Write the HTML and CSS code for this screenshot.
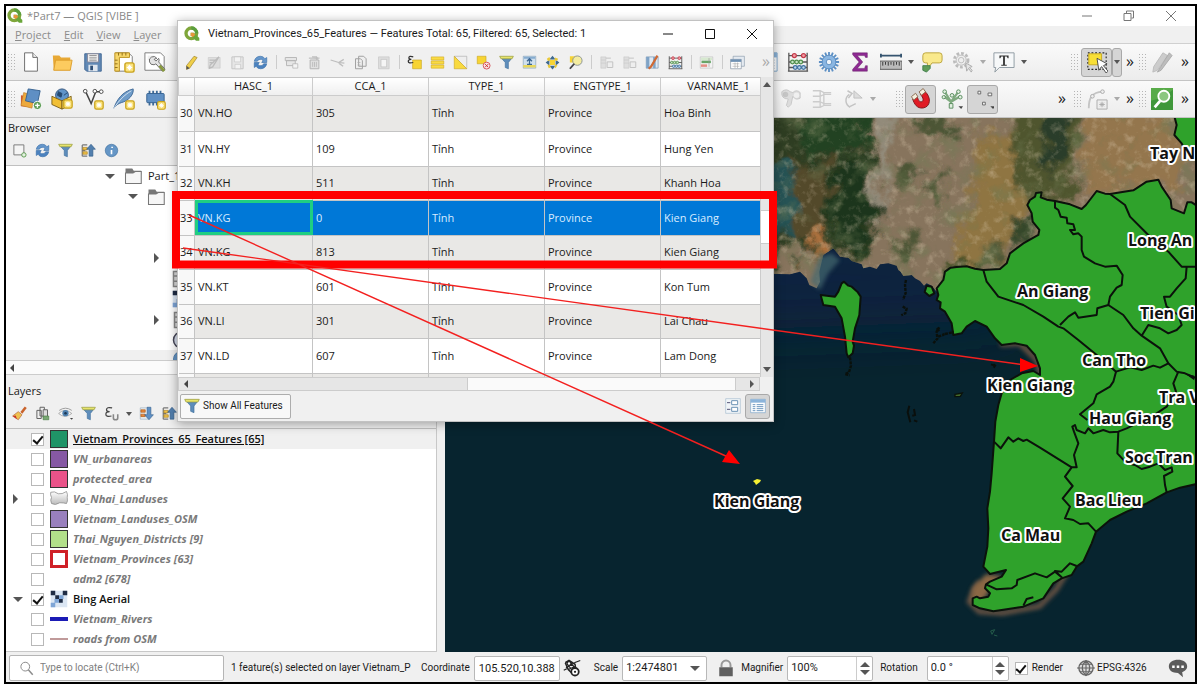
FILE: index.html
```html
<!DOCTYPE html>
<html lang="en">
<head>
<meta charset="utf-8">
<title>*Part7 — QGIS [VIBE ]</title>
<link rel="stylesheet" href="styles.css">
</head>
<body>
<svg class="defs" aria-hidden="true">
<defs>
<linearGradient id="gg" x1="0" y1="0" x2="0" y2="1"><stop offset="0" stop-color="#fff"/><stop offset="1" stop-color="#bbb"/></linearGradient>
<symbol id="logo" viewBox="0 0 24 24"><circle cx="11" cy="11" r="8" fill="none" stroke="#7fa63a" stroke-width="5"/><path d="M11 3a8 8 0 0 1 8 8" fill="none" stroke="#5b9e3e" stroke-width="5"/><path d="M10 10h5l8 8v4h-5l-8-8z" fill="#6aa63a"/><path d="M10 10h4l3 3-4 4-3-3z" fill="#e8963c"/></symbol>
<symbol id="star" viewBox="0 0 12 12"><rect x="1" y="1" width="10" height="10" rx="2" fill="#fbe27a" stroke="#c9a21b" stroke-width="1.5"/><path d="M6 3v6M3 6h6M4 4l4 4M8 4l-4 4" stroke="#fff" stroke-width="1.2"/></symbol>
<symbol id="new" viewBox="0 0 24 24"><path d="M5 2h9l5 5v15H5z" fill="#fff" stroke="#666"/><path d="M14 2v5h5" fill="#eee" stroke="#666"/></symbol>
<symbol id="open" viewBox="0 0 24 24"><path d="M2 5h7l2 2h10v14H3z" fill="#e8a936"/><path d="M5 10h18l-2 11H3z" fill="#fccb5f" stroke="#dc9d2a"/></symbol>
<symbol id="save" viewBox="0 0 24 24"><path d="M3 3h18v19H5l-2-2z" fill="#6189b5" stroke="#3f6693"/><path d="M6 3h12v9H6z" fill="#eee" stroke="#889"/><path d="M8 5h8M8 7.500h8M8 10h8" stroke="#888"/><path d="M7 15h10v7H7z" fill="#dfe6ee"/><path d="M9 16h3v5H9z" fill="#2e4f76"/></symbol>
<symbol id="layout" viewBox="0 0 24 24"><path d="M3 2h14l4 4v16H3z" fill="#fff" stroke="#777"/><path d="M2 2h16v5H7v15H2z" fill="#f6d66a" stroke="#b98d1a"/><path d="M6 2v3M10 2v3M14 2v3M2 10h3M2 14h3M2 18h3" stroke="#8b6914"/><use href="#star" x="12" y="12" width="12" height="12"/></symbol>
<symbol id="report" viewBox="0 0 24 24"><path d="M1 2h17l4 4v15H1z" fill="#fff" stroke="#777"/><path d="M4 5h7v5H4z" fill="#eee"/><path d="M14 8a4.500 4.500 0 1 0-3 7l2-1 7 8 3-2-7-8a4 4 0 0 0 0-4l-3 3-2-2z" fill="#e4e4e4" stroke="#666"/><path d="M17 16l5 6" stroke="#88993d" stroke-width="3"/></symbol>
<symbol id="addlayer" viewBox="0 0 24 24"><path d="M1 8l12 2-2 11-10-1z" fill="#d2572e"/><path d="M4 5l12 3-3 14-12-3z" fill="#eda93d" stroke="#b9772a" stroke-width=".6"/><path d="M9 1l13 2-3 14-13-3z" fill="#5f8fc4" stroke="#35608f"/><circle cx="19" cy="19" r="4.500" fill="#5f9d57" stroke="#fff"/><path d="M19 16.500v5M16.500 19h5" stroke="#fff" stroke-width="1.500"/></symbol>
<symbol id="geopkg" viewBox="0 0 24 24"><circle cx="12" cy="8" r="7" fill="#5f94c9" stroke="#2d4e77"/><path d="M8 4l4 2-1 4-4-2zM14 8l4-3" fill="#244870" stroke="#244870"/><path d="M1 9l11 5v9L1 18z" fill="#f1bf35" stroke="#7b5e16"/><path d="M12 14l10-5v9l-10 5z" fill="#fbdc6a" stroke="#7b5e16"/><use href="#star" x="13" y="12" width="11" height="11"/></symbol>
<symbol id="vlayer" viewBox="0 0 24 24"><path d="M4 4l6 13L15 4h6" fill="none" stroke="#444" stroke-width="1.600"/><circle cx="3.500" cy="3.500" r="2" fill="#fff" stroke="#444"/><circle cx="14" cy="3.500" r="2" fill="#fff" stroke="#444"/><circle cx="21" cy="4" r="2" fill="#fff" stroke="#444"/><use href="#star" x="13" y="13" width="11" height="11"/></symbol>
<symbol id="feather" viewBox="0 0 24 24"><path d="M1 22C4 13 10 4 22 1c1 6-5 13-13 15-3 1-5 2-8 6z" fill="#6f9cc9" stroke="#3c6795"/><path d="M1 22C7 13 12 8 20 3" stroke="#d8e6f3" fill="none"/><use href="#star" x="13" y="13" width="11" height="11"/></symbol>
<symbol id="chip" viewBox="0 0 24 24"><path d="M6 3v16M10 3v16M14 3v16M18 3v16" stroke="#3f6b98" stroke-width="2"/><rect x="3" y="6" width="19" height="10" rx="1" fill="#6090c4" stroke="#35608f"/><use href="#star" x="14" y="14" width="10" height="10"/></symbol>
<symbol id="abacus" viewBox="0 0 24 24"><path d="M2 2v20M22 2v20M1 22h22M2 5h20M2 12h20M2 18h20" stroke="#555" stroke-width="1.400" fill="none"/><g stroke-width="1.300"><g fill="#f3a0a8" stroke="#c33b4a"><circle cx="8" cy="5" r="2.200"/><circle cx="18" cy="5" r="2.200"/></g><g fill="#c6e5c3" stroke="#4c8b48"><circle cx="6" cy="12" r="2"/><circle cx="10.500" cy="12" r="2"/><circle cx="15" cy="12" r="2"/></g><g fill="#b9d5ee" stroke="#3b6e9e"><circle cx="9" cy="18" r="2"/><circle cx="13.500" cy="18" r="2"/><circle cx="18" cy="18" r="2"/></g></g></symbol>
<symbol id="gear" viewBox="0 0 24 24"><path d="M12 1v22M1 12h22M4.200 4.200l15.600 15.600M19.800 4.200L4.200 19.800M7.800 1.800l8.400 20.400M16.200 1.800L7.800 22.200M1.800 7.800l20.400 8.400M22.200 7.800L1.800 16.200" stroke="#5c8fc4" stroke-width="2"/><circle cx="12" cy="12" r="7.500" fill="#8ab6e2" stroke="#5a8cc0"/><circle cx="12" cy="12" r="3" fill="#eef4fa" stroke="#5a8cc0"/></symbol>
<symbol id="sigma" viewBox="0 0 24 24"><path d="M4 2h16v5h-2l-1-2H9l6 7-6 7h8l1-3h2v6H4v-2l7-8-7-8z" fill="#8e2a92" stroke="#5c175f" stroke-width=".5"/></symbol>
<symbol id="ruler" viewBox="0 0 24 24"><path d="M1 5h22M1 3v4M23 3v4" stroke="#35546f" stroke-width="2"/><path d="M0 11h24v9H0z" fill="#bbb" stroke="#555"/><path d="M3 12v4M6 12v3M9 12v4M12 12v3M15 12v4M18 12v3M21 12v4" stroke="#333"/></symbol>
<symbol id="tip" viewBox="0 0 24 24"><path d="M5 2h15q3 0 3 3v5q0 3-3 3h-8l-5 7v-7H5q-3 0-3-3V5q0-3 3-3z" fill="#f9e98c" stroke="#b9a23c"/><path d="M2 16h8v3l-4 4-4-2z" fill="#5f9d57" stroke="#3f7d4b"/></symbol>
<symbol id="gearfind" viewBox="0 0 24 24"><g stroke="#bbb" fill="none"><circle cx="10" cy="10" r="7.500" stroke-width="3" stroke-dasharray="3 2"/><circle cx="10" cy="10" r="5.500" fill="#eee"/><circle cx="10" cy="10" r="3"/><path d="M15 13l1 9 2-3 3 4 1-2-3-3 3-1z" fill="#e4e4e4" stroke="#aaa"/></g></symbol>
<symbol id="textann" viewBox="0 0 24 24"><path d="M1 2h22v16H7l-5 5 1-5H1z" fill="#f6f8f9" stroke="#8b979f"/><path d="M7 5h10v3h-1l-1-2h-2v9h2v1H9v-1h2V6H9L8 8H7z" fill="#333"/></symbol>
<symbol id="select" viewBox="0 0 24 24"><path d="M2 2h20v18H2z" fill="none" stroke="#222" stroke-width="1.200" stroke-dasharray="2 2"/><path d="M3 3h14v12H3z" fill="#f8df36" stroke="#c7a81c"/><path d="M12 8l2 13 3-4 5 7 2-2-5-6 4-2z" fill="#fff" stroke="#444"/></symbol>
<symbol id="pencils" viewBox="0 0 24 24"><path d="M13 2l5 3-11 16-5 2 1-6z" fill="#ccc" stroke="#bbb"/><path d="M20 2l3 3-12 16-4 2z" fill="#bdbdbd" stroke="#aaa"/></symbol>
<symbol id="binoc" viewBox="0 0 24 24"><path d="M2 4q5-4 9 0l3 1q4-4 8 0v6q-5 3-8-2l-2 9-3 3-2-2 2-7q-8 0-7-8z" fill="#dcdcdc" stroke="#c6c6c6"/><circle cx="6" cy="7" r="3" fill="#c4c4c4"/><circle cx="18" cy="8" r="3" fill="#f0f0f0"/></symbol>
<symbol id="mesh" viewBox="0 0 24 24"><path d="M2 3h8l4 2h8M2 9h8l4-2h8M2 15h8l4 2h8M2 21h8l4-2h8M10 3v18M14 5v14" stroke="#ccc" stroke-width="1.500" fill="none"/></symbol>
<symbol id="rot" viewBox="0 0 24 24"><path d="M9 21a8 8 0 0 1-1-14M6 3l5 3-4 5M9 20l6-3" fill="none" stroke="#c4c4c4" stroke-width="1.600"/><path d="M13 3l9 8h-9z" fill="#ddd" stroke="#c0c0c0"/></symbol>
<symbol id="magnet" viewBox="0 0 24 24"><g transform="rotate(-8 12 12)"><path d="M3 11l5-3c1 4 1 7 4 7s3-4 0-8l5-3c7 8 4 18-4 18C6 22 4 16 3 11z" fill="#e01b24" stroke="#83151a"/><path d="M2 8l5-3 2 4-5 3zM11 4l5-3 2 4-5 3z" fill="#f5efdf" stroke="#8a6b52"/></g></symbol>
<symbol id="topo" viewBox="0 0 24 24"><path d="M4 4l7 11 8-11M11 15l10-6M10 20l1-5M3 9l8 6" stroke="#7faa7f" stroke-width="2.400" fill="none"/><g fill="#e2efe0" stroke="#548a5b"><circle cx="4" cy="4" r="2"/><circle cx="19" cy="4" r="2"/><circle cx="21" cy="10" r="2"/><circle cx="12" cy="8" r="2"/><circle cx="3" cy="10" r="1.800"/><path d="M9 17h4v5H9z"/></g><path d="M19 20h5l-2 3z" fill="#444"/></symbol>
<symbol id="snapdots" viewBox="0 0 24 24"><g fill="#f4f4f4" stroke="#666"><path d="M6.500 3.500h3v3h-3zM17.500 5.500h4v3h-4zM11.500 15.500h3v3h-3z"/></g><path d="M20 20h5l-2 3z" fill="#444"/></symbol>
<symbol id="curve" viewBox="0 0 24 24"><path d="M3 22C3 10 7 5 18 4" stroke="#c4c4c4" stroke-width="2" fill="none"/><g fill="#eee" stroke="#aaa"><circle cx="18" cy="4" r="2"/><circle cx="7" cy="9" r="2"/><path d="M12 13h11v10H12z"/><path d="M17.500 15v6M14.500 18h6M15.500 16l4 4M19.500 16l-4 4"/></g></symbol>
<symbol id="find" viewBox="0 0 24 24"><path d="M0 0h24v24H0z" fill="#58ab49"/><path d="M0 14q12-2 24-12v22H0z" fill="#3f973a"/><circle cx="14" cy="9" r="6" fill="#8bc77f" stroke="#fff" stroke-width="2"/><path d="M10 14l-6 7" stroke="#fff" stroke-width="3"/></symbol>
<symbol id="addsel" viewBox="0 0 24 24"><path d="M3 3h16v16H3z" fill="#f5f5f5" stroke="#777" stroke-width="1.500"/><circle cx="19" cy="19" r="3.500" fill="#e4f1e0" stroke="#5a9a4e" stroke-width="1.500"/></symbol>
<symbol id="refresh" viewBox="0 0 24 24"><path d="M2 10Q4 2 12 2q5 0 7 4l3-2v8h-8l2-3q-2-3-5-2-3 0-4 3z" fill="#6596cb" stroke="#376da8"/><path d="M22 14q-2 8-10 8-5 0-7-4l-3 2v-8h8l-2 3q2 3 5 2 3 0 4-3z" fill="#4b82bf" stroke="#376da8"/></symbol>
<symbol id="filter" viewBox="0 0 24 24"><path d="M2 3h20l-7 9v10l-5-2v-8z" fill="#5e8dbb" stroke="#3f6f9c"/><path d="M1 2h22l-2 4H3z" fill="#e7e46b" stroke="#9a9a3a"/></symbol>
<symbol id="collapse" viewBox="0 0 24 24"><path d="M2 3h8M2 21h8M2 3v18M2 12h5" stroke="#777" stroke-width="2" fill="none"/><path d="M3 7h7v4H3zM3 14h7v4H3z" fill="#f0c24a" stroke="#a77c18"/><path d="M16 2l7 8h-4v11h-6V10H9z" fill="#527fae" stroke="#2f5a86"/></symbol>
<symbol id="expand" viewBox="0 0 24 24"><path d="M2 3h13v18H2z" fill="#eef2f5" stroke="#93a9bd"/><path d="M3 6h7v4H3zM3 13h7v4H3z" fill="#e9873a" stroke="#a75918"/><path d="M16 22l7-8h-4V2h-6v12H9z" fill="#5f90c4" stroke="#35608f"/></symbol>
<symbol id="info" viewBox="0 0 24 24"><circle cx="12" cy="12" r="10" fill="#6596c6" stroke="#396b9c"/><path d="M13 6v2M12 11v7" stroke="#fff" stroke-width="2.600"/></symbol>
<symbol id="folder" viewBox="0 0 24 24"><path d="M2 2h9l2 3h10v5H2z" fill="#777"/><path d="M2 8h10l3-2h8v16H2z" fill="#f6f6f6" stroke="#777" stroke-width="1.400"/></symbol>
<symbol id="brush" viewBox="0 0 24 24"><path d="M22 2l-7 9" stroke="#c9632c" stroke-width="4"/><path d="M10 9l6 5-6 8-9-6z" fill="#eec24f" stroke="#b05a31"/><path d="M1 16l5-1 2 6z" fill="#c9342c"/></symbol>
<symbol id="group" viewBox="0 0 24 24"><path d="M8 2h7v14H8zM3 7h7v13H3z" fill="#eee" stroke="#666" stroke-width="1.600"/><path d="M13 6h7v12h-7z" fill="#ddd" stroke="#666" stroke-width="1.600"/><path d="M13 16h9v6h-9z" fill="#79a873" stroke="#477a44"/></symbol>
<symbol id="eye" viewBox="0 0 24 24"><path d="M1 12q10-10 21 0-11 9-21 0z" fill="#f7f7f7" stroke="#888"/><path d="M2 7Q12 0 22 7" fill="none" stroke="#999" stroke-width="1.500"/><circle cx="12" cy="11.500" r="5" fill="#4d7fae"/><circle cx="12" cy="11.500" r="2" fill="#1c3753"/><path d="M19 19h5l-2 3z" fill="#444"/></symbol>
<symbol id="eps" viewBox="0 0 24 24"><path d="M13 3Q4 1 4 6q0 3 5 3-6 0-6 4 0 5 9 3" fill="none" stroke="#444" stroke-width="2"/><path d="M15 13v6q0 3 3.500 3t3.500-3v-6" fill="none" stroke="#888" stroke-width="2.500"/></symbol>
<symbol id="pencil" viewBox="0 0 24 24"><path d="M16 2l5 2L9 21l-5 2v-6z" fill="#f0cf4a" stroke="#967b24"/><path d="M4 17l5 4-5 2z" fill="#555"/></symbol>
<symbol id="gedit" viewBox="0 0 24 24"><path d="M2 4h19v17H2z" fill="#dedede" stroke="#c8c8c8"/><path d="M19 3L9 19l-5 2 1-5zM4 8h9M4 12h7" stroke="#bbb" stroke-width="2" fill="none"/></symbol>
<symbol id="gsave" viewBox="0 0 24 24"><path d="M3 3h18v19H3z" fill="#e6e6e6" stroke="#c4c4c4" stroke-width="1.500"/><path d="M7 3h10v8H7zM8 15h9v7H8z" fill="#f3f3f3" stroke="#c4c4c4"/></symbol>
<symbol id="gadd" viewBox="0 0 24 24"><path d="M2 4h18v5H2zM4 9h14v8H4z" fill="#e6e6e6" stroke="#b5b5b5" stroke-width="1.500"/><path d="M14 14h8v7h-8z" fill="#f4f4f4" stroke="#aaa"/></symbol>
<symbol id="gdel" viewBox="0 0 24 24"><path d="M5 8h14v14H5zM3 5h17M8 3h8v5" fill="#e0e0e0" stroke="#b5b5b5" stroke-width="1.600"/><path d="M9 11v8M12 11v8M15 11v8" stroke="#aaa"/></symbol>
<symbol id="gcut" viewBox="0 0 24 24"><path d="M1 8l13 4 9 1M14 12l8-5M14 13l7 5" stroke="#bdbdbd" stroke-width="2" fill="none"/></symbol>
<symbol id="gcopy" viewBox="0 0 24 24"><path d="M9 2h8l4 4v12H9zM4 6h8l3 3v13H4z" fill="#eee" stroke="#a2a2a2" stroke-width="1.600"/><path d="M7 12h5M7 16h5" stroke="#aaa"/></symbol>
<symbol id="gpaste" viewBox="0 0 24 24"><path d="M4 3h17v19H4z" fill="#ddd" stroke="#c4c4c4"/><path d="M8 7h9v12H8z" fill="#f5f5f5" stroke="#bbb"/></symbol>
<symbol id="selexp" viewBox="0 0 24 24"><path d="M9 8h14v14H9z" fill="#f7d433" stroke="#c9a51e"/><path d="M10 3Q3 1 3 4.500 3 7 7 7 2 7 2 10q0 4 8 2" fill="none" stroke="#333" stroke-width="2"/></symbol>
<symbol id="selall" viewBox="0 0 24 24"><path d="M2 3h20v5H2zM2 9.500h20v5H2zM2 16h20v5H2z" fill="#fadb45" stroke="#d0aa20"/></symbol>
<symbol id="selinv" viewBox="0 0 24 24"><path d="M2 2h20v20z" fill="#eee" stroke="#aaa"/><path d="M2 2v20h20z" fill="#f9da3f" stroke="#cca723"/></symbol>
<symbol id="desel" viewBox="0 0 24 24"><path d="M2 2h14v12H2z" fill="#f7d433" stroke="#c9a51e"/><circle cx="17" cy="17" r="5.500" fill="#f9e4e4" stroke="#d5525a" stroke-width="1.500"/><path d="M14.500 14.500l5 5M19.500 14.500l-5 5" stroke="#c33" stroke-width="1.500"/></symbol>
<symbol id="top" viewBox="0 0 24 24"><path d="M2 2h20v19H2z" fill="#cfe0ee" stroke="#7e9bb5"/><path d="M3 3h18v3H3z" fill="#86acd0"/><path d="M2 18h20" stroke="#e9d75a" stroke-width="4"/><path d="M12 7v8M8 10l4-4 4 4M8 15h8" stroke="#3d6792" stroke-width="2" fill="none"/></symbol>
<symbol id="pan" viewBox="0 0 24 24"><path d="M12 1l5 6H7zM12 23l5-6H7zM1 12l6-5v10zM23 12l-6-5v10z" fill="#3f698f"/><path d="M8 8h8v8H8z" fill="#f7d433"/><path d="M3 6l4-3 2 5-4 2zM16 4l5 2-2 4-4-2zM4 16l4-1 1 5-3 1zM16 15l4 1-3 5-2-2z" fill="#e9c93a"/></symbol>
<symbol id="zoomsel" viewBox="0 0 24 24"><path d="M3 2h12v10H3z" fill="#f7d433"/><circle cx="15" cy="9" r="7.500" fill="#f4ec9f" stroke="#8a9298" stroke-width="1.500"/><path d="M10 14l-7 8" stroke="#444" stroke-width="3"/></symbol>
<symbol id="gcol" viewBox="0 0 24 24"><path d="M3 3h8v18H3zM3 8h8M3 13h8" fill="#dedede" stroke="#c8c8c8"/><path d="M13 11h9v9h-9zM11 5h8" fill="#eee" stroke="#c0c0c0" stroke-width="1.500"/></symbol>
<symbol id="fedit" viewBox="0 0 24 24"><path d="M2 3h19v18H2z" fill="#dfe9f3" stroke="#6b8cab"/><path d="M2 3h5v18H2zM13 3h4v18h-4z" fill="#7fa3c6"/><path d="M20 1L10 18l-4 4" stroke="#d06a35" stroke-width="3.500"/></symbol>
<symbol id="cond" viewBox="0 0 24 24"><path d="M2 3h20v18H2z" fill="#f3f3f3" stroke="#bbb"/><path d="M3 4h18v4H3z" fill="#d7e9d0"/><path d="M4 9h15v4H4z" fill="#67a567"/><path d="M3 15h10v4H3z" fill="#e48d84"/><path d="M16 5v14" stroke="#999"/></symbol>
<symbol id="dock" viewBox="0 0 24 24"><path d="M5 2h18v16H5z" fill="#e4eaf0" stroke="#8596a6"/><path d="M1 7h17v15H1z" fill="#fff" stroke="#78899a"/><path d="M1 7h17v4H1z" fill="#6f91b3"/><path d="M4 14h11M4 18h11M8 12v9M12 12v9" stroke="#aaa"/></symbol>
<symbol id="form" viewBox="0 0 24 24"><path d="M1 1h22v22H1z" fill="#f0f4f8" stroke="#a7bccf"/><path d="M10 4h9v6h-9zM10 14h9v6h-9z" fill="#fff" stroke="#6d93b5" stroke-width="1.500"/><path d="M3 7h5M3 17h5" stroke="#557" stroke-width="1.500"/></symbol>
<symbol id="tableview" viewBox="0 0 24 24"><path d="M1 2h22v20H1z" fill="#fff" stroke="#7aa3c8"/><path d="M1 2h22v5H1z" fill="#8cb4da"/><path d="M4 10h4M10 10h10M4 13h4M10 13h10M4 16h4M10 16h10M4 19h4M10 19h10" stroke="#6d97bf" stroke-width="1.500"/></symbol>
<symbol id="loupe" viewBox="0 0 24 24"><circle cx="10" cy="9" r="7" fill="none" stroke="#8c8c8c" stroke-width="1.600"/><path d="M15 14l7 8" stroke="#8c8c8c" stroke-width="2.400"/></symbol>
<symbol id="lock" viewBox="0 0 24 24"><path d="M6 11V8a6 6 0 0 1 12 0v3" fill="none" stroke="#999" stroke-width="2.600"/><path d="M3 11h18v12H3z" fill="#606060"/></symbol>
<symbol id="globe" viewBox="0 0 24 24"><circle cx="12" cy="12" r="9.500" fill="#ddd" stroke="#666" stroke-width="1.800"/><path d="M12 2v20M0 12h24M4 7h16M4 17h16M12 2q-10 10 0 20 10-10 0-20" fill="none" stroke="#666" stroke-width="1.500"/></symbol>
<symbol id="chat" viewBox="0 0 24 24"><path d="M12 2c6 0 11 3 11 8 0 4-3 6-6 7l1 6-6-5C5 18 1 15 1 10s5-8 11-8z" fill="#5b5b5b"/><path d="M5 9h3v3H5zM10.500 9h3v3h-3zM16 9h3v3h-3z" fill="#fff"/></symbol>
<symbol id="extent" viewBox="0 0 24 24"><path d="M3 5l5-3 8 5 1 6M3 5l4 9 4 4" fill="none" stroke="#222" stroke-width="2"/><path d="M5 6l8 10M9 4l8 9M4 12l9-6M15 5l8-3M7 14l9-4M1 15l4-2" stroke="#222" stroke-width="1.600"/><circle cx="16" cy="17" r="5" fill="#fff" stroke="#222" stroke-width="2.400"/><circle cx="16" cy="17" r="1.500" fill="#222"/><circle cx="8" cy="6" r="2.500" fill="#fff" stroke="#222" stroke-width="1.500"/></symbol>
<symbol id="poly" viewBox="0 0 24 24"><path d="M1 3q5-2 10 2 5 1 11-3 2 4 1 8 1 5-1 8-4-1-9-1-6 4-11 1-2-5 0-8-2-4-1-7z" fill="url(#gg)" stroke="#888"/></symbol>
<symbol id="raster" viewBox="0 0 24 24"><path d="M1 1h22v22H1z" fill="#dbe6f3"/><path d="M1 1h6v6H1zM17 1h6v6h-6zM7 7h5v5H7zM12 12h5v5h-5z" fill="#1f2c44"/><path d="M12 7h6v5h-6zM6 12h6v5H6zM1 17h6v6H1z" fill="#7ea5d6"/></symbol>
<symbol id="dbgrid" viewBox="0 0 24 24"><path d="M2 2h20v20H2zM2 8h20M2 15h20M9 2v20" fill="#ddd" stroke="#888" stroke-width="2"/></symbol>
<symbol id="ell" viewBox="0 0 24 24"><circle cx="13" cy="12" r="11" fill="#d5dcea" stroke="#445" stroke-width="2"/></symbol>
</defs>
</svg>

<div class="screen">
<main class="app">
  <header class="titlebar">
    <svg class="logo"><use href="#logo"/></svg><h1>*Part7 — QGIS [VIBE ]</h1>
    <div class="winbtns">
      <button aria-label="Minimize"><svg viewBox="0 0 12 12"><path d="M1 6h10"/></svg></button>
      <button aria-label="Restore"><svg viewBox="0 0 12 12"><path d="M1 3.500h7v7H1zM3.500 3V1h7v7H8.500"/></svg></button>
      <button aria-label="Close"><svg viewBox="0 0 12 12"><path d="M1 1l10 10M11 1L1 11"/></svg></button>
    </div>
  </header>
  <nav class="menubar"><button><u>P</u>roject</button><button><u>E</u>dit</button><button><u>V</u>iew</button><button><u>L</u>ayer</button></nav>

  <div class="toolbar">
    <i class="grip"></i>
    <button class="tb" aria-label="New project"><svg><use href="#new"/></svg></button>
    <button class="tb" aria-label="Open project"><svg><use href="#open"/></svg></button>
    <button class="tb" aria-label="Save project"><svg><use href="#save"/></svg></button>
    <button class="tb" aria-label="New layout"><svg><use href="#layout"/></svg></button>
    <button class="tb" aria-label="Layout manager"><svg><use href="#report"/></svg></button>
    <div class="right">
      <button class="tb" aria-label="Attribute table"><svg><use href="#tableview"/></svg></button>
      <button class="tb" aria-label="Field calculator"><svg><use href="#abacus"/></svg></button>
      <button class="tb" aria-label="Toolbox"><svg><use href="#gear"/></svg></button>
      <button class="tb" aria-label="Statistics"><svg><use href="#sigma"/></svg></button>
      <button class="tb" aria-label="Measure"><svg><use href="#ruler"/></svg></button><button class="dd" aria-label="Measure menu"></button>
      <button class="tb" aria-label="Map tips"><svg><use href="#tip"/></svg></button>
      <button class="tb" aria-label="Run action"><svg><use href="#gearfind"/></svg></button><button class="dd pale" aria-label="Action menu"></button>
      <button class="tb" aria-label="Text annotation"><svg><use href="#textann"/></svg></button><button class="dd" aria-label="Annotation menu"></button>
      <i class="grip wide-gap"></i>
      <button class="tb on" aria-label="Select features"><svg><use href="#select"/></svg></button><button class="dd on" aria-label="Select menu"></button>
      <button class="more">»</button><i class="grip"></i>
      <button class="tb" aria-label="Current edits"><svg><use href="#pencils"/></svg></button><button class="more">»</button>
    </div>
  </div>
  <div class="toolbar">
    <i class="grip"></i>
    <button class="tb" aria-label="Data source manager"><svg><use href="#addlayer"/></svg></button>
    <button class="tb" aria-label="New GeoPackage"><svg><use href="#geopkg"/></svg></button>
    <button class="tb" aria-label="New shapefile"><svg><use href="#vlayer"/></svg></button>
    <button class="tb" aria-label="New SpatiaLite"><svg><use href="#feather"/></svg></button>
    <button class="tb" aria-label="New memory layer"><svg><use href="#chip"/></svg></button>
    <div class="right">
      <button class="tb" aria-label="Offset curve"><svg><use href="#binoc"/></svg></button>
      <button class="tb" aria-label="Merge"><svg><use href="#mesh"/></svg></button>
      <button class="tb" aria-label="Rotate"><svg><use href="#rot"/></svg></button><button class="dd pale" aria-label="Rotate menu"></button>
      <i class="grip snap-gap"></i>
      <button class="tb on" aria-label="Snapping"><svg><use href="#magnet"/></svg></button>
      <button class="tb" aria-label="Topology"><svg><use href="#topo"/></svg></button>
      <button class="tb on" aria-label="Snap type"><svg><use href="#snapdots"/></svg></button>
      <button class="more push">»</button><i class="grip"></i>
      <button class="tb" aria-label="Digitize curve"><svg><use href="#curve"/></svg></button><button class="dd pale" aria-label="Curve menu"></button>
      <button class="more">»</button><i class="grip"></i>
      <button class="tb" aria-label="QuickOSM"><svg><use href="#find"/></svg></button><button class="more">»</button>
    </div>
  </div>

  <div class="work">
    <aside class="docks">
      <section class="dock">
        <h2>Browser</h2>
        <div class="dockbar">
          <button aria-label="Add selected"><svg><use href="#addsel"/></svg></button><button aria-label="Refresh"><svg><use href="#refresh"/></svg></button><button aria-label="Filter"><svg><use href="#filter"/></svg></button><button aria-label="Collapse all"><svg><use href="#collapse"/></svg></button><button aria-label="Properties"><svg><use href="#info"/></svg></button>
        </div>
        <ul class="tree browser">
          <li class="d1"><i class="tri down"></i><svg><use href="#folder"/></svg>Part_1</li>
          <li class="d2"><i class="tri down"></i><svg><use href="#folder"/></svg></li>
          <li></li><li></li>
          <li class="d3"><i class="tri side"></i></li>
          <li class="d4"><svg><use href="#dbgrid"/></svg></li>
          <li class="d4"><svg><use href="#raster"/></svg></li>
          <li class="d3"><i class="tri side"></i><svg><use href="#dbgrid"/></svg></li>
          <li class="d4"><svg><use href="#ell"/></svg></li>
          <li class="d4 hl"><svg><use href="#info"/></svg></li>
        </ul>
        <div class="hbar"><i class="tri left"></i></div>
      </section>
      <section class="dock">
        <h2>Layers</h2>
        <div class="dockbar">
          <button aria-label="Styling"><svg><use href="#brush"/></svg></button><button aria-label="Add group"><svg><use href="#group"/></svg></button><button aria-label="Themes"><svg><use href="#eye"/></svg></button><button aria-label="Filter legend"><svg><use href="#filter"/></svg></button><button aria-label="Filter by expression"><svg><use href="#eps"/></svg></button><button class="dd" aria-label="Expression menu"></button><button aria-label="Expand all"><svg><use href="#expand"/></svg></button><button aria-label="Collapse all"><svg><use href="#collapse"/></svg></button>
        </div>
        <ul class="tree layers">
          <li class="active"><i></i><input type="checkbox" id="l1" checked><b class="sw c1"></b><label for="l1">Vietnam_Provinces_65_Features [65]</label></li>
          <li><i></i><input type="checkbox" id="l2"><b class="sw c2"></b><label for="l2">VN_urbanareas</label></li>
          <li><i></i><input type="checkbox" id="l3"><b class="sw c3"></b><label for="l3">protected_area</label></li>
          <li><i class="tri side"></i><input type="checkbox" id="l4"><svg><use href="#poly"/></svg><label for="l4">Vo_Nhai_Landuses</label></li>
          <li><i></i><input type="checkbox" id="l5"><b class="sw c5"></b><label for="l5">Vietnam_Landuses_OSM</label></li>
          <li><i></i><input type="checkbox" id="l6"><b class="sw c6"></b><label for="l6">Thai_Nguyen_Districts [9]</label></li>
          <li><i></i><input type="checkbox" id="l7"><b class="sw c7"></b><label for="l7">Vietnam_Provinces [63]</label></li>
          <li><i></i><input type="checkbox" id="l8"><b class="sw none"></b><label for="l8">adm2 [678]</label></li>
          <li class="shown"><i class="tri down"></i><input type="checkbox" id="l9" checked><svg><use href="#raster"/></svg><label for="l9">Bing Aerial</label></li>
          <li><i></i><input type="checkbox" id="l10"><b class="line river"></b><label for="l10">Vietnam_Rivers</label></li>
          <li><i></i><input type="checkbox" id="l11"><b class="line road"></b><label for="l11">roads from OSM</label></li>
        </ul>
      </section>
    </aside>

    <section class="map">
      <svg viewBox="445 118 750 535" preserveAspectRatio="xMinYMin slice" role="img" aria-label="Map of the Mekong delta">
        <defs>
          <filter id="b1" x="-50%" y="-50%" width="200%" height="200%"><feGaussianBlur stdDeviation="25"/></filter>
          <filter id="b2" x="-50%" y="-50%" width="200%" height="200%"><feGaussianBlur stdDeviation="6"/></filter>
          <filter id="rough" x="-10%" y="-10%" width="120%" height="120%"><feGaussianBlur in="SourceGraphic" stdDeviation="9" result="s"/><feTurbulence type="fractalNoise" baseFrequency=".016" numOctaves="5" seed="4"/><feDisplacementMap in="s" scale="110" xChannelSelector="R" yChannelSelector="G"/><feGaussianBlur stdDeviation="2"/></filter>
          <filter id="dark" x="0" y="0" width="100%" height="100%"><feTurbulence type="fractalNoise" baseFrequency=".045" numOctaves="5" seed="8"/><feColorMatrix values="0 0 0 0 .16  0 0 0 0 .2  0 0 0 0 .09  3 0 0 0 -1.500"/></filter>
          <filter id="light" x="0" y="0" width="100%" height="100%"><feTurbulence type="fractalNoise" baseFrequency=".11" numOctaves="5" seed="21"/><feColorMatrix values="0 0 0 0 .72  0 0 0 0 .6  0 0 0 0 .44  0 2.500 0 0 -1.300"/></filter>
          <clipPath id="land"><path d="M-40 0H1250V500H505L490 512 470 530 455 512 440 505 432 512 420 498 405 490 395 480 370 483 362 470 355 465 350 452 325 445 300 448 290 462 270 455 250 460 245 448 215 438 205 428 180 425 160 400 130 420 118 470 120 500 110 520 88 510 80 490 60 470 30 478-40 476z"/></clipPath>
        </defs>
        <path d="M440 110h760v550H440z" fill="#07242f"/>
        <path d="M730 230h270l10 90-280 10z" fill="#0a2240" filter="url(#b1)"/>
        <g transform="translate(780 115) scale(.33333)">
          <g clip-path="url(#land)">
            <path d="M-40 0H1250V530H-40z" fill="#87745d"/>
            <g filter="url(#rough)">
              <path d="M-60-20h330v180l30 140-20 130H60L40 340l-100 140z" fill="#2d3c20"/>
              <path d="M60-20H270V90L170 120 60 100z" fill="#244220"/>
              <path d="M30 150L150 130 140 320 90 380 40 340z" fill="#524a2c"/>
              <path d="M170 140L260 120 280 400 200 410 150 330z" fill="#1b351a"/>
              <path d="M-60 130L30 170 40 340-60 360z" fill="#285254"/>
              <path d="M110 340l25 20-10 50-45 25z" fill="#b0733f"/>
              <path d="M290 0h40l-25 300-25-10z" fill="#938c7c"/>
              <path d="M610 60h100l30 190-80 200H520z" fill="#8f7443"/>
              <path d="M690-20H910L870 200 900 270 740 260 700 120z" fill="#50542f"/>
              <path d="M790-20h80l-20 150-30 60-40-40z" fill="#2a3e2a"/>
              <path d="M700 290l60 10 20 60-80 50z" fill="#34472b"/>
              <path d="M920-20h280v240H900z" fill="#94764e"/>
              <path d="M430-20l110 60-30 30-120-40zM340 160h70v60h-70zM455 190l30-10 10 70-30 20zM350 370l60 10-10 80-40-10zM620 390l50 10-5 40-50-5z" fill="#4b5535"/>
              <path d="M510 435h120v25H500z" fill="#3a4c23"/>
            </g>
          </g>
          <g clip-path="url(#land)"><g transform="scale(3)"><path d="M-14 0h430v175h-430z" filter="url(#dark)" opacity=".55"/><path d="M-14 0h430v175h-430z" filter="url(#light)" opacity=".4"/></g></g>
          <path d="M90 500l30-75 35-10 25 20-35 40-25 50z" fill="#456970" filter="url(#b2)" opacity=".7"/>
          <g filter="url(#b2)" fill="none" stroke="#7f5d47" stroke-width="16" opacity=".8"><path d="M660 688l60-3 50 50 12 45M600 1400l-18 25-14 35 30 30 70 4 110-20 50-50 50-80 80-150 80-55 130-60 90-25"/></g>
          <path d="M618 1378l50 5-40 45-20 30-35 0 5-40z" fill="#8b6845" filter="url(#b2)"/>
          <g fill="#2fa22b" stroke="#0b120b" stroke-width="6" stroke-linejoin="round">
            <path d="M512 458L530 456 560 454 585 461 610 465 660 462 680 445 690 415 730 385 775 360 778 345 758 320 755 295 742 270 750 255 765 245 768 234 785 232 782 247 800 254 825 258 870 268 905 282 918 270 950 228 975 236 990 237 1060 226 1100 200 1135 194 1145 215 1172 255 1175 280 1212 295 1222 262 1235 262 1250 272V1107L1200 1118 1160 1132 1100 1165 1040 1190 990 1215 948 1250 935 1285 910 1340 890 1355 875 1380 845 1390 820 1405 790 1450 730 1475 680 1483 640 1489 600 1480 578 1470 578 1450 590 1445 600 1450 625 1445 630 1435 615 1420 618 1408 630 1400 665 1385 678 1365 630 1377 610 1355 622 1295 625 1240 622 1180 630 1130 635 1075 642 980 646 920 655 870 665 835 690 795 725 775 760 768 780 780 780 760 765 720 740 692 705 685 665 690 645 670 620 635 585 618 560 635 545 655 520 660 515 625 495 590 480 580 482 562 470 555 475 540 470 520 490 495 495 470z"/>
            <path d="M192 500L205 512 215 515 232 530 242 545 238 600 225 640 218 680 222 692 218 715 205 727 200 715 195 665 185 610 165 575 130 570 122 540 165 545 175 530 185 505z"/>
            <path d="M1182 0L1190 30 1183 60 1205 85 1215 105 1250 105V0zM440 512l15 3 8 20-15 8-14-12z"/>
          </g>
          <g fill="none" stroke="#0b120b" stroke-width="6" stroke-linejoin="round">
            <path d="M610 465L620 500 655 545 730 570 790 605 835 635 850 640 895 675 940 712 975 740 1008 770 1000 800 990 815 950 838 940 865 900 898 922 915M840 630L865 605 885 592 895 608 950 600 952 580 985 570 990 545 1010 518 1025 510 1028 480 1010 452 975 455 945 445 912 425 905 405 905 365 895 355 880 358 870 345 885 345 880 328 862 325 860 308 842 305 835 285 825 278V258"/>
            <path d="M990 237L1035 270 1050 305 1090 345 1120 375 1165 410 1205 455H1250M1220 455L1217 490 1190 520 1170 545 1152 545 1160 575 1195 600 1205 630 1190 645 1165 655 1140 640 1105 630 1085 662M985 570L1030 600 1060 640 1085 662 1140 700 1165 745 1190 770 1215 775 1250 790M1008 770L1050 757 1085 765 1120 752 1140 758 1165 745M1195 770L1180 805 1188 830 1160 875 1130 895 1040 940 1015 950 990 952 970 945 940 955 925 940 915 955 890 945 885 930 877 935 882 950 895 985 882 1020 890 1057 875 1057 855 1085 878 1113 848 1150 870 1175 855 1210 880 1215 900 1227 925 1225 948 1250"/>
            <path d="M642 980L662 1000 685 967 700 980 715 970 730 978 740 974 780 998 875 1057M1015 950L1012 1015 1040 1045 1065 1050 1085 1062 1110 1055 1135 1045 1155 1065 1175 1057 1177 1070 1152 1083 1155 1110 1160 1132M618 1408L650 1423 695 1420 710 1410 712 1395 765 1375 800 1387 825 1370 845 1387 825 1368 845 1370 870 1345 890 1353M730 1472l10-20 20-5"/>
          </g>
          <g fill="none" stroke="#0a100b" stroke-width="7" stroke-linejoin="round" stroke-dasharray="9 3"><path d="M210 727l3 25-6 20-12 5 14 4M378 495l-3 14 2 25-8 20M368 575l12 6-4 14-12 6M460 685l12-14-2-22 8-12M475 665l15-5 3-8M495 657l26-6M640 748l5 4"/></g>
          <g fill="none" stroke="#0a0f0c" stroke-width="6"><path d="M470 640l8 8M633 748l12 4-4 6M388 872l-5 20 8 30M402 882l3 18-8 2M412 920l-10-4"/></g>
          <path d="M1215 776l28 6v14z" fill="#0a100b"/>
          <path d="M525 838l22-4-6 10-16 1z" fill="#446b2b" stroke="#0b120b" stroke-width="4"/>
          <path d="M632 1548l12-4-8 14zM642 1560l10 3" stroke="#245c4a" stroke-width="3" fill="none"/>
        </g>
        <path d="M753 481l4-2 4 1-1 2-4 3-1-2z" fill="#f5f032"/>
        <g class="maplabels">
          <text x="1150" y="159">Tay N</text><text x="1128" y="246">Long An</text><text x="1017" y="297">An Giang</text><text x="1140" y="319">Tien Gi</text><text x="1082" y="366">Can Tho</text><text x="987" y="391">Kien Giang</text><text x="1159" y="403">Tra V</text><text x="1089" y="424">Hau Giang</text><text x="1125" y="463">Soc Tran</text><text x="1075" y="506">Bac Lieu</text><text x="1001" y="541">Ca Mau</text><text x="714" y="507">Kien Giang</text>
        </g>
      </svg>
    </section>
  </div>

  <footer class="status">
    <label class="locator"><svg><use href="#loupe"/></svg><input type="text" placeholder="Type to locate (Ctrl+K)" aria-label="Locator"></label>
    <span class="msg">1 feature(s) selected on layer Vietnam_P</span>
    <label for="coord">Coordinate</label><input class="box coord" id="coord" type="text" value="105.520,10.388">
    <button class="ib ext" aria-label="Toggle extents"><svg><use href="#extent"/></svg></button>
    <label for="scale">Scale</label><span class="combo"><select class="box" id="scale"><option>1:2474801</option></select><i class="tri down"></i></span>
    <button class="ib lock" aria-label="Lock scale"><svg><use href="#lock"/></svg></button>
    <label for="mag">Magnifier</label><span class="spin"><input id="mag" type="text" value="100%"><span><button aria-label="Increase magnifier"><i class="tri up"></i></button><button aria-label="Decrease magnifier"><i class="tri down"></i></button></span></span>
    <label class="rotl" for="rot1">Rotation</label><span class="spin rots"><input id="rot1" type="text" value="0.0 °"><span><button aria-label="Increase rotation"><i class="tri up"></i></button><button aria-label="Decrease rotation"><i class="tri down"></i></button></span></span>
    <input class="rcheck" type="checkbox" id="render" checked><label for="render">Render</label>
    <button class="crs"><svg><use href="#globe"/></svg>EPSG:4326</button>
    <button class="ib chat" aria-label="Messages"><svg><use href="#chat"/></svg></button>
  </footer>
</main>

<section class="dialog" role="dialog" aria-labelledby="dt">
  <header class="dtitle"><svg class="logo"><use href="#logo"/></svg><h2 id="dt">Vietnam_Provinces_65_Features — Features Total: 65, Filtered: 65, Selected: 1</h2>
    <div class="winbtns dark">
      <button aria-label="Minimize table"><svg viewBox="0 0 12 12"><path d="M1 6h10"/></svg></button>
      <button aria-label="Maximize table"><svg viewBox="0 0 12 12"><path d="M1.500 1.500h9v9h-9z"/></svg></button>
      <button aria-label="Close table"><svg viewBox="0 0 12 12"><path d="M1 1l10 10M11 1L1 11"/></svg></button>
    </div>
  </header>
  <div class="dtools">
    <button aria-label="Edit"><svg><use href="#pencil"/></svg></button><button aria-label="Multi edit"><svg><use href="#gedit"/></svg></button><button aria-label="Save edits"><svg><use href="#gsave"/></svg></button><button aria-label="Reload"><svg><use href="#refresh"/></svg></button><i></i><button aria-label="Add feature"><svg><use href="#gadd"/></svg></button><button aria-label="Delete"><svg><use href="#gdel"/></svg></button><button aria-label="Cut"><svg><use href="#gcut"/></svg></button><button aria-label="Copy"><svg><use href="#gcopy"/></svg></button><button aria-label="Paste"><svg><use href="#gpaste"/></svg></button><i></i><button aria-label="Select by expression"><svg><use href="#selexp"/></svg></button><button aria-label="Select all"><svg><use href="#selall"/></svg></button><button aria-label="Invert selection"><svg><use href="#selinv"/></svg></button><button aria-label="Deselect"><svg><use href="#desel"/></svg></button><button aria-label="Filter form"><svg><use href="#filter"/></svg></button><button aria-label="Move to top"><svg><use href="#top"/></svg></button><button aria-label="Pan to selection"><svg><use href="#pan"/></svg></button><button aria-label="Zoom to selection"><svg><use href="#zoomsel"/></svg></button><i></i><button aria-label="New field"><svg><use href="#gcol"/></svg></button><button aria-label="Delete field"><svg><use href="#gcol"/></svg></button><button aria-label="Organize columns"><svg><use href="#fedit"/></svg></button><button aria-label="Calculator"><svg><use href="#abacus"/></svg></button><i></i><button aria-label="Conditional format"><svg><use href="#cond"/></svg></button><i></i><button aria-label="Dock table"><svg><use href="#dock"/></svg></button><button class="more faint">»</button>
  </div>
  <div class="grid">
    <div class="tablewrap">
      <table>
        <colgroup><col class="n"><col class="first"><col><col><col><col></colgroup>
        <thead><tr><th></th><th>HASC_1</th><th>CCA_1</th><th>TYPE_1</th><th>ENGTYPE_1</th><th>VARNAME_1</th></tr></thead>
        <tbody>
          <tr><th>30</th><td>VN.HO</td><td>305</td><td>Tỉnh</td><td>Province</td><td>Hoa Binh</td></tr>
          <tr><th>31</th><td>VN.HY</td><td>109</td><td>Tỉnh</td><td>Province</td><td>Hung Yen</td></tr>
          <tr><th>32</th><td>VN.KH</td><td>511</td><td>Tỉnh</td><td>Province</td><td>Khanh Hoa</td></tr>
          <tr class="sel"><th>33</th><td class="cur">VN.KG</td><td>0</td><td>Tỉnh</td><td>Province</td><td>Kien Giang</td></tr>
          <tr><th>34</th><td>VN.KG</td><td>813</td><td>Tỉnh</td><td>Province</td><td>Kien Giang</td></tr>
          <tr><th>35</th><td>VN.KT</td><td>601</td><td>Tỉnh</td><td>Province</td><td>Kon Tum</td></tr>
          <tr><th>36</th><td>VN.LI</td><td>301</td><td>Tỉnh</td><td>Province</td><td>Lai Chau</td></tr>
          <tr><th>37</th><td>VN.LD</td><td>607</td><td>Tỉnh</td><td>Province</td><td>Lam Dong</td></tr>
          <tr><th></th><td></td><td></td><td></td><td></td><td></td></tr>
        </tbody>
      </table>
    </div>
    <div class="vscroll"><i class="tri up"></i><b></b><i class="tri down"></i></div>
    <div class="hscroll"><i class="tri left"></i><b></b><i class="tri side"></i></div>
  </div>
  <footer class="dfoot"><button class="showall"><svg><use href="#filter"/></svg>Show All Features</button><button class="vb" aria-label="Form view"><svg><use href="#form"/></svg></button><button class="vb on" aria-label="Table view"><svg><use href="#tableview"/></svg></button></footer>
</section>

<svg class="notes" viewBox="0 0 1200 687" aria-hidden="true">
  <rect x="176" y="195" width="597" height="69.500" fill="none" stroke="#f00" stroke-width="8"/>
  <g stroke="#f3201f" stroke-width="1.400"><path d="M189 215L728 457M183 248L1025 365" fill="none"/></g>
  <g fill="#f00"><path d="M740 464l-18-2 7-12zM1038 366l-18-8v14z"/></g>
</svg>
</div>
</body>
</html>
```
FILE: styles.css
```css
* { box-sizing: border-box; }
body { margin: 0; background: #fff; color: #1a1a1a; font: 11px/16px "Open Sans", "Noto Sans", sans-serif; }
h1, h2, ul { margin: 0; padding: 0; font-size: 11px; font-weight: 400; list-style: none; }
button { margin: 0; padding: 0; border: 0; background: none; color: inherit; font: inherit; display: flex; align-items: center; justify-content: center; flex: none; }
input, select { font: inherit; color: inherit; margin: 0; }
i, b { font-style: normal; flex: none; }
.defs { position: absolute; width: 0; height: 0; }
.screen { position: relative; min-height: 100vh; padding: 4px 3px 3px 4px; display: flex; overflow: hidden; }
.app { flex: 1; min-width: 0; display: flex; flex-direction: column; border: 2px solid #000; background: #f0f0f0; }

.tri { width: 0; height: 0; border: 4px solid transparent; }
.tri.down { border-width: 5px 5px 0; border-top-color: #555; }
.tri.up { border-width: 0 5px 5px; border-bottom-color: #555; }
.tri.side { border-width: 5px 0 5px 5px; border-left-color: #555; }
.tri.left { border-width: 4px 4px 4px 0; border-right-color: #444; }

.titlebar { display: flex; align-items: center; height: 20px; background: #fff; color: #888; }
.logo { width: 16px; height: 16px; margin: 0 4px 0 1px; }
.winbtns { margin-left: auto; display: flex; gap: 18px; padding-right: 12px; }
.winbtns button { width: 24px; height: 20px; }
.winbtns svg { width: 12px; height: 12px; fill: none; stroke: #777; }
.winbtns.dark { padding-right: 9px; }
.winbtns.dark svg { stroke: #111; }
.menubar { display: flex; gap: 13px; height: 18px; padding-left: 9px; color: #8c8c8c; border-bottom: 1px solid #d0d0d0; overflow: hidden; }

.toolbar { display: flex; align-items: center; height: 37px; padding: 0 2px 0 1px; background: linear-gradient(#fafafa, #ececec); border-bottom: 1px solid #c4c4c4; }
.toolbar .right { margin-left: auto; display: flex; align-items: center; }
.grip { width: 8px; height: 18px; background: radial-gradient(circle, #b5b5b5 0 1px, transparent 1px) 0 0 / 3px 3px; }
.wide-gap { margin: 0 3px 0 41px; }
.snap-gap { margin: 0 2px 0 17px; }
.tb { width: 31px; height: 29px; border: 1px solid transparent; border-radius: 3px; }
.tb svg { width: 22px; height: 22px; }
.on { background: #d5d5d5; border: 1px solid #a9a9a9; border-radius: 3px; }
.dd { width: 10px; height: 29px; }
.dd::after { content: ""; border: 3px solid transparent; border-width: 4px 3px 0; border-top-color: #555; }
.dd.pale::after { border-top-color: #aaa; }
.more { width: 16px; padding-bottom: 2px; font-size: 16px; }
.more.push { margin: 0 3px 0 56px; }
.more.faint { color: #aaa; margin-left: auto; }

.work { flex: 1; min-height: 0; display: flex; }
.docks { flex: none; width: 431px; display: flex; flex-direction: column; border-right: 1px solid #c8c8c8; }
.dock h2 { padding: 3px 2px 0; }
.dock:first-child h2 { padding-top: 2px; }
.dock + .dock { padding-top: 5px; flex: 1; display: flex; flex-direction: column; }
.dockbar { display: flex; align-items: center; height: 29px; padding-left: 2px; }
.dockbar button { width: 23px; height: 24px; }
.dockbar .dd { width: 12px; }
.dockbar svg { width: 15px; height: 15px; }
.tree { background: #fff; border-top: 1px solid #c0c0c0; }
.tree li { display: flex; align-items: center; height: 20px; overflow: hidden; }
.browser li:nth-child(even) { height: 21px; }
.browser li:last-child { height: 10px; align-items: flex-start; }
.browser svg { width: 18px; height: 18px; margin-right: 6px; }
.browser .d1 { padding-left: 99px; }
.browser .d2 { padding-left: 122px; }
.browser .d1 .tri, .browser .d2 .tri { margin-right: 9px; }
.browser .d3 { padding-left: 148px; }
.browser .d3 .tri { margin-right: 14px; }
.browser .d4 { padding-left: 166px; }
.hl { background: #f0f0f0; }
.hbar { display: flex; align-items: center; height: 15px; padding-left: 4px; background: #fbfbfb; border: 1px solid #ccc; border-width: 1px 0; }
.layers { flex: 1; border-bottom: 1px solid #c8c8c8; color: #7a7a7a; font-style: italic; font-weight: 700; }
.layers li > i:first-child { margin-left: 7px; }
.layers li > i:not(.tri) { width: 10px; }
.layers .side { margin-right: 5px; }
.layers input { margin-left: 8px; }
.layers .sw, .layers li > svg, .line { width: 18px; height: 18px; margin: 0 5px 0 6px; border: 1px solid #333; }
.layers li > svg { border: 0; }
.layers .none { border: 0; }
.c1 { background: #1f9467; } .c2 { background: #8659a4; } .c3 { background: #ea5389; } .c5 { background: #9980bd; } .c6 { background: #b2e08a; }
.layers .c7 { background: #fff; border: 3px solid #cf2027; }
.layers .line { border: 0; }
.layers .river { height: 4px; background: #1b1bb5; }
.layers .road { height: 2px; background: #c09a9a; }
.layers .active { background: #f0f0f0; color: #111; font-style: normal; font-weight: 600; text-decoration: underline; }
.layers .shown { color: #111; font-style: normal; font-weight: 600; }
input[type="checkbox"] { appearance: none; flex: none; width: 13px; height: 13px; border: 1px solid #b8b8b8; background: #fff; display: grid; place-items: center; }
input[type="checkbox"]:checked::after { content: ""; width: 4px; height: 8px; border: solid #111; border-width: 0 2px 2px 0; transform: rotate(40deg); }

.map { flex: 1; min-width: 0; margin-left: 8px; background: #07242f; position: relative; overflow: hidden; }
.map svg { position: absolute; width: 100%; height: 100%; display: block; }
.maplabels { font: 700 16px "Open Sans", "Noto Sans", sans-serif; fill: #111; stroke: #fff; stroke-width: 4px; paint-order: stroke; stroke-linejoin: round; }

.status { display: flex; align-items: center; height: 30px; padding: 2px 7px 0 3px; white-space: nowrap; font-family: Roboto, "Noto Sans", sans-serif; font-size: 10px; }
.status > * { flex: none; }
.locator { display: flex; align-items: center; gap: 6px; width: 215px; height: 26px; padding-left: 9px; background: #fff; border: 1px solid #b5b5b5; border-radius: 2px; }
.locator svg { width: 15px; height: 15px; flex: none; }
.locator input { border: 0; outline: 0; padding: 0; width: 160px; }
.locator input::placeholder { color: #808080; }
.msg { min-width: 186px; margin: 0 4px 0 7px; }
.box, .spin { height: 25px; background: #fff; border: 1px solid #b8b8b8; border-radius: 2px; font-size: 11px; }
.coord { width: 86px; padding: 0 4px; margin-left: 4px; }
.ib svg { width: 18px; height: 18px; }
.ext { margin: 0 13px 0 3px; }
.combo { position: relative; display: flex; margin-left: 4px; }
.combo select { appearance: none; width: 85px; padding: 0 3px; }
.combo .tri { position: absolute; right: 7px; top: 10px; pointer-events: none; }
.lock { margin: 0 6px 0 10px; }
.spin { display: flex; width: 86px; margin-left: 4px; }
.spin input { flex: 1; min-width: 0; border: 0; padding: 0 3px; background: none; }
.spin > span { width: 16px; display: flex; flex-direction: column; justify-content: center; gap: 3px; border-left: 1px solid #ccc; align-items: center; }
.rotl { margin-left: 7px; }
.rots { width: 82px; margin-left: 9px; }
.status .rcheck { margin: 0 4px 0 6px; }
.crs { margin-left: 14px; }
.crs svg { width: 18px; height: 18px; margin-right: 2px; }
.chat { margin-left: auto; }
.chat svg { width: 20px; height: 20px; }

.dialog { position: absolute; left: 177px; top: 20px; width: 597px; background: #f0f0f0; border: 1px solid #c2c2c2; box-shadow: 0 2px 10px rgba(0, 0, 0, .35); }
.dtitle { display: flex; align-items: center; height: 26px; background: #fff; }
.dtitle h2 { font: 11px/16px Roboto, "Noto Sans", sans-serif; }
.dtitle .logo { margin: 0 8px 0 6px; }
.dtools { display: flex; align-items: center; height: 30px; padding-left: 2px; }
.dtools button { width: 23px; }
.dtools svg { width: 15px; height: 15px; }
.dtools i { width: 8px; height: 14px; background: linear-gradient(#ccc, #ccc) center / 1px 100% no-repeat; }
.dtools .more { width: 14px; }
.grid { display: grid; grid-template-columns: 1fr 13px; }
.tablewrap { height: 300px; overflow: hidden; border-top: 1px solid #c4c4c4; background: #fff; }
table { table-layout: fixed; width: 598px; border-collapse: collapse; }
col { width: 116px; }
col.n { width: 16px; }
col.first { width: 118px; }
th { font-weight: 400; padding: 0; }
thead th { height: 17px; line-height: 14px; background: linear-gradient(#fff, #efefef); border: 1px solid #ccc; border-top: 0; }
tbody th { background: #f8f8f8; color: #1a1a1a; border: 1px solid #c4c4c4; border-left: 0; }
tbody tr { height: 34px; background: #fff; }
tbody tr:nth-child(even) { height: 35px; }
tbody tr:first-child { height: 36px; }
tbody tr:nth-child(odd) { background: #e9e8e6; }
td { padding: 0 3px; border: 1px solid #c4c4c4; }
tbody tr.sel { background: #0078d7; color: #d8ecff; }
.cur { outline: 3px solid #1fce82; outline-offset: -3px; }
.vscroll, .hscroll { display: flex; align-items: center; justify-content: space-between; background: #e6e6e6; }
.vscroll { flex-direction: column; padding: 5px 0; border-left: 1px solid #ccc; }
.vscroll b { width: 100%; height: 34px; background: #fff; border: 1px solid #ccc; border-width: 1px 0; }
.hscroll { padding: 0 5px; height: 14px; border: 1px solid #ccc; }
.hscroll b { width: 269px; height: 100%; margin-left: auto; margin-right: 14px; background: #fafafa; border: 1px solid #ccc; border-width: 0 1px; }
.vscroll .tri { border-left-width: 4px; border-right-width: 4px; }
.hscroll .tri.side { border-width: 4px 0 4px 4px; }
.dfoot { display: flex; align-items: center; height: 30px; padding: 0 3px 0 2px; }
.showall { width: 111px; height: 25px; justify-content: flex-start; gap: 3px; padding-left: 3px; margin-right: auto; background: #f8f8f8; border: 1px solid #adadad; border-radius: 2px; font-family: Roboto, "Noto Sans", sans-serif; font-size: 10px; white-space: nowrap; }
.showall svg { width: 16px; height: 16px; flex: none; }
.vb { width: 25px; height: 25px; }
.vb svg { width: 16px; height: 16px; }

.notes { position: absolute; left: 0; top: 0; width: 100%; pointer-events: none; }
```
